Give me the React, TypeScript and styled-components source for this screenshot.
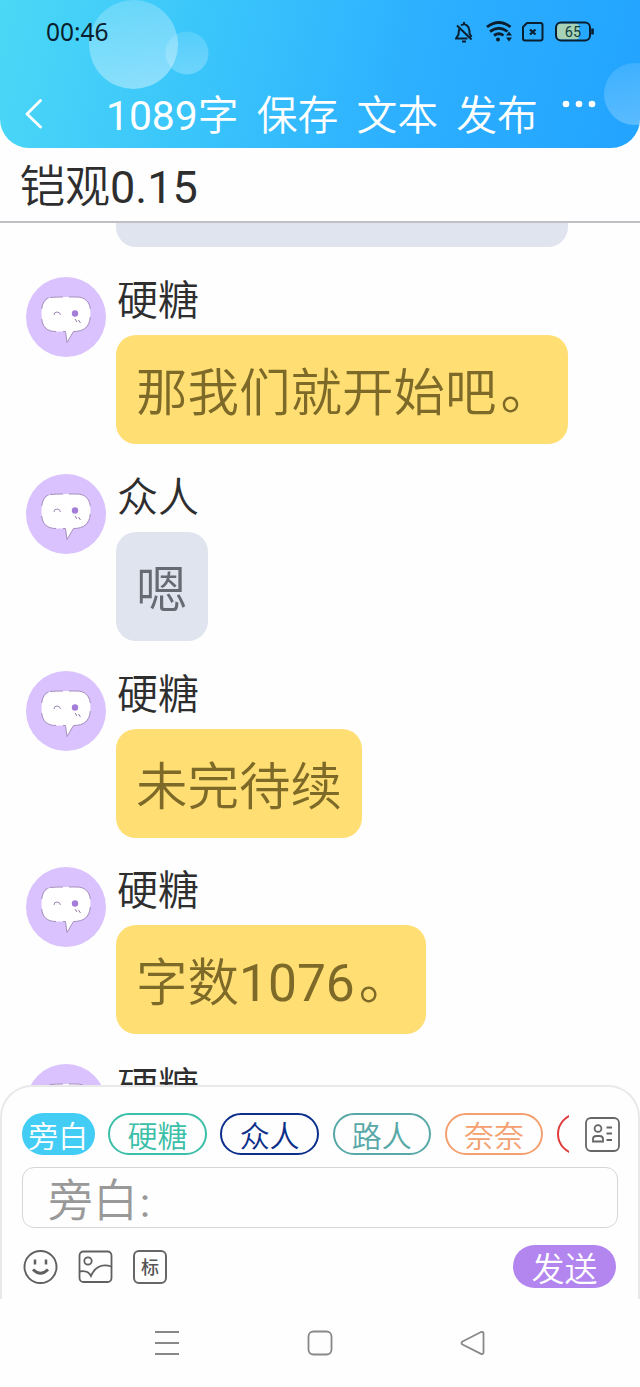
import React from "react";
import styled, { createGlobalStyle } from "styled-components";

const Global = createGlobalStyle`
  * { box-sizing: border-box; }
  body {
    margin: 0;
    background: #fefefe;
    font-family: Roboto, "Noto Sans CJK SC DemiLight", "Noto Sans CJK SC", sans-serif;
    color: #2e2e2e;
  }
`;

const Screen = styled.div`
  width: 640px;
  height: 1387px;
  display: flex;
  flex-direction: column;
  overflow: hidden;
`;

const Header = styled.header`
  position: relative;
  height: 147.5px;
  flex: none;
  overflow: hidden;
  border-radius: 0 0 29px 29px;
  background: linear-gradient(103deg, #4bd8f6 0%, #39c4fb 34%, #2cafff 65%, #22a4ff 100%);
`;

const Bubbles = styled.svg`
  position: absolute;
  inset: 0;
`;

const StatusBar = styled.div`
  position: relative;
  height: 64px;
  padding: 0 45px 0 46px;
  display: flex;
  align-items: center;
  justify-content: space-between;
`;

const Clock = styled.span`
  font: 400 24.5px/28px "Noto Sans", sans-serif;
  color: #0a1e2e;
`;

const StatusIcons = styled.svg`
  display: block;
`;

const Toolbar = styled.div`
  position: relative;
  height: 83px;
  padding-left: 24px;
  display: flex;
  align-items: center;
`;

const Back = styled.svg`
  margin-top: 17px;
`;

const Actions = styled.div`
  display: flex;
  gap: 18.2px;
  margin-left: 62px;
  padding-top: 21px;
  font-size: 40.8px;
  line-height: 60px;
  color: #fff;
  white-space: nowrap;
`;

const More = styled.svg`
  margin: 0 0 4px 23px;
`;

const Title = styled.h1`
  margin: 0;
  height: 75.5px;
  flex: none;
  padding: 5px 20px 0;
  border-bottom: 2px solid #c0c0c4;
  font-size: 45px;
  line-height: 70px;
  font-weight: 400;
`;

const Chat = styled.main`
  height: 863px;
  flex: none;
  overflow: hidden;
`;

const Remainder = styled.div`
  width: 452px;
  height: 24px;
  margin: 0 0 30px 116px;
  background: #dfe4ee;
  border-radius: 0 0 20px 20px;
`;

const Message = styled.article`
  height: 196.8px;
  padding-left: 26px;
  display: flex;
  gap: 10px;
`;

const Avatar = styled.svg`
  flex: none;
`;

const Name = styled.div`
  height: 58px;
  padding-left: 1px;
  font-size: 41px;
  line-height: 48px;
`;

const Speech = styled.div<{ $tone: "yellow" | "grey" }>`
  width: fit-content;
  height: 109px;
  padding: 3px 20px 0;
  border-radius: 20px;
  font-size: 51.5px;
  line-height: 111px;
  white-space: nowrap;
  background: ${(p) => (p.$tone === "yellow" ? "#ffde73" : "#dfe4ee")};
  color: ${(p) => (p.$tone === "yellow" ? "#7d6928" : "#666a73")};
`;

const FullStop = styled.span`
  margin: 0 -4px 0 4px;
  line-height: 0;
  vertical-align: 2px;
`;

const Composer = styled.section`
  position: relative;
  flex: none;
  height: 213.5px;
  margin-top: -1px;
  padding: 26px 18px 0 20px;
  border: 2px solid #e9e9eb;
  border-bottom: 0;
  border-radius: 32px 32px 0 0;
  background: #fefefe;
`;

const RoleRow = styled.div`
  display: flex;
  align-items: center;
  justify-content: space-between;
  height: 42px;
`;

const Roles = styled.div`
  display: flex;
  gap: 13.7px;
  width: 547px;
  overflow: hidden;
`;

const Role = styled.span<{ $color: string; $active?: boolean }>`
  flex: none;
  width: ${(p) => (p.$active ? "72.5px" : "98.5px")};
  height: 42px;
  border: 2px solid ${(p) => p.$color};
  border-radius: 21px;
  background: ${(p) => (p.$active ? p.$color : "transparent")};
  color: ${(p) => (p.$active ? "#fff" : p.$color)};
  font-size: 30px;
  line-height: 43px;
  display: flex;
  justify-content: center;
  white-space: nowrap;
`;

const Field = styled.div`
  width: 596px;
  height: 61px;
  margin-top: 12px;
  padding-left: 25px;
  border: 1.5px solid #d6d6d8;
  border-radius: 12px;
  color: #999;
  font-size: 45px;
  line-height: 67px;
`;

const Colon = styled.span`
  margin-left: -1.5px;
  font-size: 34px;
  line-height: 0;
`;

const Tools = styled.div`
  display: flex;
  align-items: center;
  gap: 20px;
  height: 43px;
  margin-top: 17px;
`;

const Tag = styled.span`
  width: 34px;
  height: 34px;
  margin-left: -1px;
  border: 2px solid #666;
  border-radius: 6px;
  font-family: "Noto Sans CJK SC", sans-serif;
  font-weight: 500;
  font-size: 18px;
  line-height: 29px;
  text-align: center;
  color: #555;
`;

const Send = styled.button`
  margin-left: auto;
  margin-right: 4px;
  width: 103px;
  height: 43px;
  padding: 3px 0 0;
  border: 0;
  border-radius: 22px;
  background: #b385ee;
  color: #fff;
  font: 400 33px/43px Roboto, "Noto Sans CJK SC DemiLight", "Noto Sans CJK SC", sans-serif;
`;

const NavBar = styled.nav`
  flex: 1;
  display: flex;
  align-items: center;
  justify-content: space-between;
  padding: 0 153px;
`;

type Line = { name: string; text: string; stop?: boolean; tone: "yellow" | "grey" };

const lines: Line[] = [
  { name: "硬糖", text: "那我们就开始吧", stop: true, tone: "yellow" },
  { name: "众人", text: "嗯", tone: "grey" },
  { name: "硬糖", text: "未完待续", tone: "yellow" },
  { name: "硬糖", text: "字数1076", stop: true, tone: "yellow" },
];

const roles = [
  { label: "旁白", color: "#43cdf5", active: true },
  { label: "硬糖", color: "#3bbfa8" },
  { label: "众人", color: "#0b2f8a" },
  { label: "路人", color: "#58a8a8" },
  { label: "奈奈", color: "#f4a070" },
  { label: "", color: "#e03c3c" },
];

const Face = () => (
  <Avatar width="80" height="80" viewBox="0 0 80 80">
    <circle cx="40" cy="40" r="40" fill="#d9c2fd" />
    <path
      d="M29 20H51C60 20 64.500 26 64.500 36C64.500 48 59 54.500 47.500 54.500L41 65.500L39.500 54.500H29C20 54.500 15.500 48 15.500 37C15.500 26 20 20 29 20Z"
      fill="#fff"
    />
    <path
      d="M24 20.500Q30 20 37 20M43 20H51C59 20 63.500 25 64.300 32M64.300 40C63.500 50 58 54.500 47.500 54.500L41 65.500L39.500 54.500H37M30 54.500C21 54.500 16.500 50 15.700 42M15.700 32C16.500 26 19 22 22.500 21"
      fill="none"
      stroke="#a690bd"
      strokeWidth="1"
    />
    <path d="M28 38Q28 35 31 35Q34 35 34.500 38" fill="none" stroke="#9f86b8" strokeWidth="1" />
    <circle cx="49" cy="36.500" r="3.200" fill="#a47dd8" />
    <path d="M49 42l2 3M52.500 43l2 3" stroke="#8f7aa0" strokeWidth="1" />
  </Avatar>
);

export default function App() {
  return (
    <Screen>
      <Global />
      <Header>
        <Bubbles width="640" height="148">
          <defs>
            <linearGradient id="orb" x1="0.3" y1="0" x2="0.6" y2="1">
              <stop offset="0" stopColor="#fff" stopOpacity="0.2" />
              <stop offset="1" stopColor="#fff" stopOpacity="0.4" />
            </linearGradient>
            <linearGradient id="faint" x1="0.3" y1="0" x2="0.6" y2="1">
              <stop offset="0" stopColor="#fff" stopOpacity="0.12" />
              <stop offset="1" stopColor="#fff" stopOpacity="0.26" />
            </linearGradient>
          </defs>
          <circle cx="133.500" cy="44.500" r="44.500" fill="url(#orb)" />
          <circle cx="187" cy="53" r="21.500" fill="url(#faint)" />
          <circle cx="635" cy="94" r="31" fill="url(#faint)" />
        </Bubbles>
        <StatusBar>
          <Clock>00:46</Clock>
          <StatusIcons width="140" height="24" viewBox="455 20 140 24" fill="none" stroke="#0a1e2e" strokeWidth="2">
            <path d="M459.500 28.500Q458.500 31 458.500 34.500L456 38.500H467.500M457 25.500L471.500 39.500M461 25.500Q464 23 467 25.500Q469.500 27.500 469.500 31V33.500L471.500 37M464 24v-2M462 41.500h4" />
            <path d="M487 27Q499 18 510.500 27M490 31.500Q499 25 507.500 31.500M494 35.500Q499 32 503.500 35.500" strokeWidth="2.800" />
            <circle cx="498" cy="39.500" r="2" fill="#0a1e2e" stroke="none" />
            <path d="M506 35.500l3-4l3 4zM506 37.500l3 4l3-4z" fill="#0a1e2e" stroke="none" />
            <path d="M527 23H540.500Q542.500 23 542.500 25V38.500Q542.500 40.500 540.500 40.500H525Q523 40.500 523 38.500V27Z" strokeLinejoin="round" />
            <path d="M530 29.500l5.500 5M535.500 29.500l-5.500 5" strokeWidth="2.300" />
            <rect x="557" y="23.500" width="22" height="16" rx="4" fill="#a6d2b8" stroke="none" />
            <rect x="556" y="22.500" width="34" height="18" rx="5" />
            <path d="M592.500 28.500v6" strokeWidth="2.600" />
            <text x="573" y="36.800" fontSize="14.500" fontFamily="Roboto, sans-serif" textAnchor="middle" fill="#123c3a" stroke="none">65</text>
          </StatusIcons>
        </StatusBar>
        <Toolbar>
          <Back width="20" height="30" viewBox="0 0 20 30" fill="none" stroke="#fff" strokeWidth="2.800" strokeLinecap="round" strokeLinejoin="round">
            <path d="M16.500 1.500L3 15L16.500 28" />
          </Back>
          <Actions>
            <span>1089字</span>
            <span>保存</span>
            <span>文本</span>
            <span>发布</span>
          </Actions>
          <More width="36" height="8" viewBox="0 0 36 8" fill="#fff">
            <circle cx="5" cy="4" r="3.300" />
            <circle cx="18" cy="4" r="3.300" />
            <circle cx="31" cy="4" r="3.300" />
          </More>
        </Toolbar>
      </Header>
      <Title>铠观0.15</Title>
      <Chat>
        <Remainder />
        {lines.map((l, i) => (
          <Message key={i}>
            <Face />
            <div>
              <Name>{l.name}</Name>
              <Speech $tone={l.tone}>
                {l.text}
                {l.stop && <FullStop>。</FullStop>}
              </Speech>
            </div>
          </Message>
        ))}
        <Message>
          <Face />
          <Name>硬糖</Name>
        </Message>
      </Chat>
      <Composer>
        <RoleRow>
          <Roles>
            {roles.map((r) => (
              <Role key={r.color} $color={r.color} $active={r.active}>
                {r.label}
              </Role>
            ))}
          </Roles>
          <svg width="35" height="35" viewBox="0 0 35 35" fill="none" stroke="#666" strokeWidth="1.800">
            <rect x="1" y="1" width="33" height="33" rx="5" />
            <circle cx="13" cy="11.500" r="3.400" />
            <path d="M8 24.500V22Q8 19 11.500 19H14.500Q18 19 18 22V24.500ZM21.500 10.500h5.500M21.500 16.500h5.500M21.500 23h5.500" />
          </svg>
        </RoleRow>
        <Field>
          旁白<Colon>：</Colon>
        </Field>
        <Tools>
          <svg width="36" height="36" viewBox="0 0 36 36" fill="none" stroke="#606060" strokeWidth="1.900">
            <circle cx="18.500" cy="18" r="16" />
            <path d="M13 10.500v5M24 10.500v5" strokeWidth="2.500" />
            <path d="M11 20.500Q18.500 28 26 20.500" strokeWidth="3" />
          </svg>
          <svg width="36" height="36" viewBox="0 0 36 36" fill="none" stroke="#606060" strokeWidth="1.800">
            <rect x="1.500" y="2.500" width="32" height="30.500" rx="4" />
            <circle cx="10" cy="12" r="3.700" />
            <path d="M1.500 22.500Q10 21 13 27Q19 13 33.500 17.500" />
          </svg>
          <Tag>标</Tag>
          <Send>发送</Send>
        </Tools>
      </Composer>
      <NavBar>
        <svg width="28" height="28" viewBox="0 0 28 28" stroke="#888" strokeWidth="1.800">
          <path d="M2 3h24M2 14h24M2 25h24" />
        </svg>
        <svg width="28" height="28" viewBox="0 0 28 28" fill="none" stroke="#888" strokeWidth="1.800">
          <rect x="2.500" y="2.500" width="23" height="23" rx="5" />
        </svg>
        <svg width="28" height="28" viewBox="0 0 28 28" fill="none" stroke="#888" strokeWidth="1.800">
          <path d="M3.500 12.500L22 3Q24.500 2.500 24.500 4.500V23.500Q24.500 25.500 22 24.800L3.500 15.500Q1.500 14 3.500 12.500Z" />
        </svg>
      </NavBar>
    </Screen>
  );
}
